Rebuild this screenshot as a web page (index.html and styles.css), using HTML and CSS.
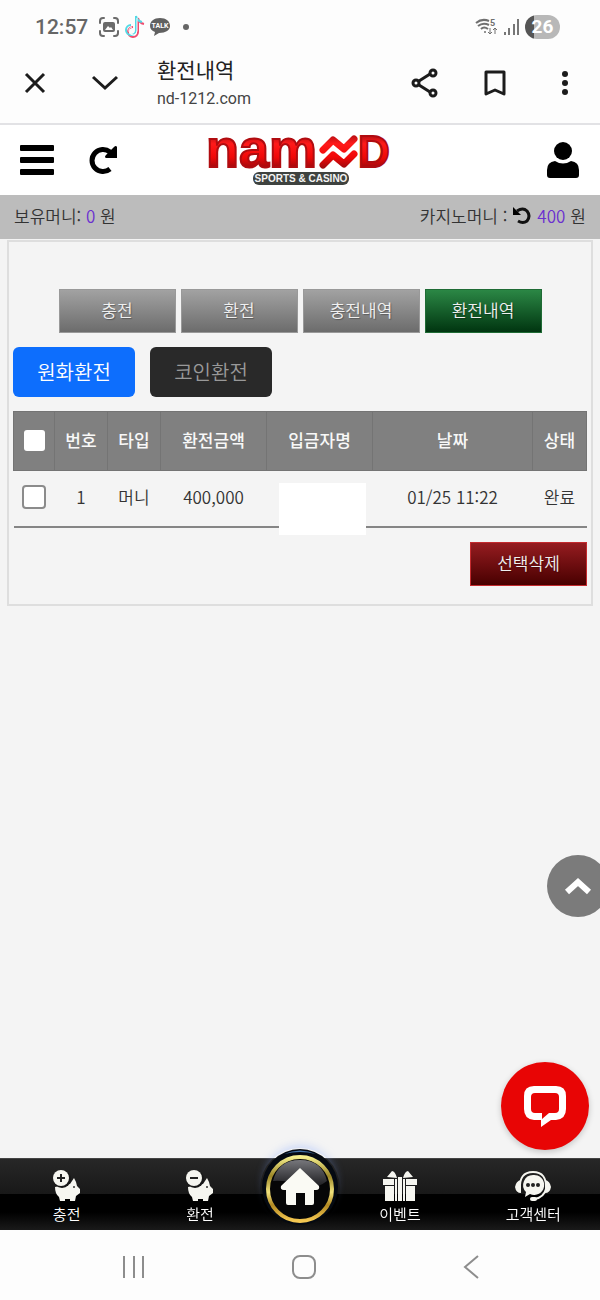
FILE: index.html
```html
<!DOCTYPE html>
<html lang="ko">
<head>
    <meta charset="UTF-8">
    <meta name="viewport" content="width=device-width, initial-scale=1.0">
    <title>환전내역</title>
    <link rel="stylesheet" href="styles.css">
</head>
<body>
    <div class="browser-bar">
        <div class="status-bar">
            <div class="status-left">
                <span class="clock">12:57</span>
                <svg width="22" height="22" viewBox="0 0 22 22" fill="none" stroke="#6b6b6b" stroke-width="2" stroke-linecap="round">
                    <path d="M2 7V5Q2 2 5 2H6M16 2H17Q20 2 20 5V7M20 15V17Q20 20 17 20H16M6 20H5Q2 20 2 17V15"/>
                    <rect x="5" y="6" width="12" height="10" rx="2" fill="#6b6b6b" stroke="none"/>
                    <path d="M7 14L10 10L12 12L13 11L15 14Z" fill="#fff" stroke="none"/>
                </svg>
                <svg width="21" height="24" viewBox="0 0 21 24" fill="none" stroke-width="2">
                    <path d="M13 2V16A5 5 0 1 1 8 11M13 2Q14 7 19 8" stroke="#ef4d70" transform="translate(1 1)"/>
                    <path d="M13 2V16A5 5 0 1 1 8 11M13 2Q14 7 19 8" stroke="#52d9e5" transform="translate(-1 -1)"/>
                    <path d="M13 3V16A4 4 0 1 1 8 12" stroke="#fff" stroke-width="1"/>
                </svg>
                <svg width="22" height="20" viewBox="0 0 22 20">
                    <path d="M11 1C5 1 1 4 1 9C1 12 3 14 6 15L5 19L10 16C17 16 21 13 21 9C21 4 17 1 11 1Z" fill="#616161"/>
                    <text x="11" y="11" text-anchor="middle" class="talk">TALK</text>
                </svg>
                <i class="dot"></i>
            </div>
            <div class="status-right">
                <svg width="24" height="20" viewBox="0 0 24 20" fill="none" stroke="#707070" stroke-width="2">
                    <path d="M1 6Q7 1 14 4M3 9Q8 5 14 8M6 12Q9 9 13 12"/>
                    <circle cx="10" cy="15" r="1" fill="#707070" stroke="none"/>
                    <path d="M15 11V17M13 15L15 17L17 15M20 17V11M18 13L20 11L22 13" stroke-width="1"/>
                    <text x="15" y="9" class="band">5</text>
                </svg>
                <svg width="18" height="18" viewBox="0 0 18 18" fill="#777">
                    <path d="M1 14H3V17H1ZM5 10H7V17H5ZM10 6H12V17H10ZM14 1H16V17H14Z"/>
                </svg>
                <span class="battery">26</span>
            </div>
        </div>
        <div class="toolbar">
            <button class="icon-btn" aria-label="닫기">
                <svg width="22" height="22" viewBox="0 0 22 22" fill="none" stroke="#1c1c1c" stroke-width="3"><path d="M2 2L20 20M20 2L2 20"/></svg>
            </button>
            <button class="icon-btn down" aria-label="접기">
                <svg width="28" height="18" viewBox="0 0 28 18" fill="none" stroke="#1c1c1c" stroke-width="3"><path d="M2 3L14 14L26 3"/></svg>
            </button>
            <div class="page-info">
                <div class="page-title">환전내역</div>
                <div class="page-url">nd-1212.com</div>
            </div>
            <div class="toolbar-actions">
                <button class="icon-btn" aria-label="공유">
                    <svg width="28" height="30" viewBox="0 0 28 30" fill="none" stroke="#1c1c1c" stroke-width="3"><path d="M8 13L19 6M8 17L19 24"/><circle cx="5" cy="15" r="3"/><circle cx="22" cy="5" r="3"/><circle cx="22" cy="25" r="3"/></svg>
                </button>
                <button class="icon-btn" aria-label="북마크">
                    <svg width="22" height="28" viewBox="0 0 22 28" fill="none" stroke="#1c1c1c" stroke-width="3" stroke-linejoin="round"><path d="M2 3H20V25L11 21L2 25Z"/></svg>
                </button>
                <button class="icon-btn" aria-label="더보기">
                    <svg width="8" height="26" viewBox="0 0 8 26" fill="#1c1c1c"><circle cx="4" cy="4" r="3"/><circle cx="4" cy="13" r="3"/><circle cx="4" cy="22" r="3"/></svg>
                </button>
            </div>
        </div>
    </div>

    <header class="site-header">
        <div class="header-side">
            <button class="icon-btn" aria-label="메뉴">
                <svg width="34" height="30" viewBox="0 0 34 30"><rect width="34" height="6" rx="1"/><rect y="12" width="34" height="6" rx="1"/><rect y="24" width="34" height="6" rx="1"/></svg>
            </button>
            <button class="icon-btn" aria-label="새로고침">
                <svg width="32" height="30" viewBox="0 0 32 30"><path d="M23 24A11 11 0 1 1 23 7" fill="none" stroke="#000" stroke-width="5"/><path d="M30 2V13H19Q17 12 19 10L27 2Q29 0 30 2Z"/></svg>
            </button>
        </div>
        <a href="#" class="logo" aria-label="NAMND Sports &amp; Casino">
            <svg width="188" height="70" viewBox="0 0 188 70">
                <defs>
                    <linearGradient id="red" x1="0" y1="8" x2="0" y2="62" gradientUnits="userSpaceOnUse">
                        <stop offset="0" stop-color="#a50d12"/>
                        <stop offset="0.2" stop-color="#ff1a1a"/>
                        <stop offset="0.45" stop-color="#f00808"/>
                        <stop offset="0.68" stop-color="#8f0a0e"/>
                    </linearGradient>
                </defs>
                <g fill="url(#red)" stroke="#b00c10">
                    <text x="0" y="42" class="logo-low">nam</text>
                    <text x="152" y="42" class="logo-cap">D</text>
                </g>
                <g fill="none" stroke="url(#red)" stroke-width="7" stroke-linecap="round" stroke-linejoin="round">
                    <path d="M117 25L127 15L138 24L148 14"/>
                    <path d="M117 40L127 30L138 39L148 29"/>
                </g>
                <rect x="47" y="47" width="96" height="13" rx="6" fill="#3e423f"/>
                <text x="95" y="57" text-anchor="middle" class="logo-tag">SPORTS &amp; CASINO</text>
            </svg>
        </a>
        <div class="header-side end">
            <button class="icon-btn" aria-label="내 정보">
                <svg width="34" height="38" viewBox="0 0 34 38"><circle cx="17" cy="10" r="9"/><path d="M1 36V29Q1 21 9 20Q17 25 25 20Q33 21 33 29V34Q33 37 30 37H4Q1 37 1 34Z"/></svg>
            </button>
        </div>
    </header>

    <div class="balance-bar">
        <div>보유머니: <span class="amount">0</span> 원</div>
        <div class="casino">카지노머니 :
            <svg width="20" height="20" viewBox="0 0 20 20"><path d="M5 5Q11 1 15 5Q19 10 15 15Q11 18 6 15" fill="none" stroke="#111" stroke-width="3"/><path d="M1 1V9H9Z"/></svg>
            <span class="amount">400</span> 원</div>
    </div>

    <main class="content">
        <section class="panel">
            <nav class="menu-tabs">
                <button class="tab">충전</button>
                <button class="tab">환전</button>
                <button class="tab">충전내역</button>
                <button class="tab active">환전내역</button>
            </nav>
            <div class="type-btns">
                <button class="type-btn blue">원화환전</button>
                <button class="type-btn dark">코인환전</button>
            </div>
            <table class="history">
                <colgroup>
                    <col class="c-check"><col class="c-small"><col class="c-small"><col class="c-mid"><col class="c-mid"><col class="c-date"><col class="c-state">
                </colgroup>
                <thead>
                    <tr>
                        <th><input type="checkbox" class="check all" aria-label="전체 선택"></th>
                        <th>번호</th>
                        <th>타입</th>
                        <th>환전금액</th>
                        <th>입금자명</th>
                        <th>날짜</th>
                        <th>상태</th>
                    </tr>
                </thead>
                <tbody>
                    <tr>
                        <td><input type="checkbox" class="check" aria-label="1번 선택"></td>
                        <td>1</td>
                        <td>머니</td>
                        <td>400,000</td>
                        <td class="name"><span class="mask"></span></td>
                        <td>01/25 11:22</td>
                        <td>완료</td>
                    </tr>
                </tbody>
            </table>
            <div class="panel-foot">
                <button class="tab delete">선택삭제</button>
            </div>
        </section>
    </main>

    <div class="bottom">
        <button class="fab top-btn" aria-label="맨 위로">
            <svg width="28" height="18" viewBox="0 0 28 18" fill="none" stroke="#fff" stroke-width="6"><path d="M3 15L14 5L25 15"/></svg>
        </button>
        <button class="fab chat-btn" aria-label="채팅">
            <svg width="42" height="42" viewBox="0 0 42 42"><path fill="#fff" fill-rule="evenodd" d="M10 1H32Q42 1 42 11V24Q42 34 32 35H27L17 42V35H10Q0 34 0 24V11Q0 1 10 1ZM11 8Q7 8 7 12V24Q7 28 11 28H18V34L25 28H31Q35 28 35 24V12Q35 8 31 8Z"/></svg>
        </button>
        <nav class="site-nav">
            <a href="#" class="nav-item">
                <svg width="28" height="32" viewBox="0 0 28 32"><path d="M2 17L17 14L21 8L23 12L24 16L27 19V23L23 26L22 31H17V29H12V31H7L6 27Q2 24 2 17Z" fill="#f6f6f0"/><circle cx="9" cy="9" r="9" fill="#171717"/><circle cx="8" cy="8" r="8" fill="#f6f6f0"/><path d="M8 4V12M4 8H12" stroke="#222" stroke-width="2"/><circle cx="21" cy="17" r="1" fill="#333"/></svg>
                충전
            </a>
            <a href="#" class="nav-item">
                <svg width="28" height="32" viewBox="0 0 28 32"><path d="M2 17L17 14L21 8L23 12L24 16L27 19V23L23 26L22 31H17V29H12V31H7L6 27Q2 24 2 17Z" fill="#f6f6f0"/><circle cx="9" cy="9" r="9" fill="#171717"/><circle cx="8" cy="8" r="8" fill="#f6f6f0"/><path d="M4 8H12" stroke="#222" stroke-width="2"/><circle cx="21" cy="17" r="1" fill="#333"/></svg>
                환전
            </a>
            <a href="#" class="home" aria-label="홈">
                <svg width="80" height="80" viewBox="0 0 80 80">
                    <defs>
                        <linearGradient id="gold" x1="0" y1="0" x2="0" y2="1">
                            <stop offset="0" stop-color="#f5ee8c"/>
                            <stop offset="0.3" stop-color="#9c8727"/>
                            <stop offset="0.55" stop-color="#f1e27c"/>
                            <stop offset="0.75" stop-color="#b38a22"/>
                            <stop offset="1" stop-color="#f5c852"/>
                        </linearGradient>
                        <linearGradient id="shine" x1="0" y1="0" x2="0" y2="1">
                            <stop offset="0" stop-color="#77777c"/>
                            <stop offset="1" stop-color="#1a1a1d"/>
                        </linearGradient>
                    </defs>
                    <circle cx="40" cy="39" r="38" fill="#050a12"/>
                    <path d="M24 6Q40 -1 56 6Q40 2 24 6Z" fill="#4372a6"/>
                    <circle cx="40" cy="41" r="32" fill="#060607" stroke="url(#gold)" stroke-width="4"/>
                    <path d="M13 33Q18 12 40 12Q62 12 67 33Q54 43 40 37Q26 32 13 33Z" fill="url(#shine)"/>
                    <path d="M40 20L59 38Q60 42 56 42H54V55Q54 57 52 57H45V45H36V57H28Q26 57 26 55V42H24Q20 42 21 38Z" fill="#fafaf4"/>
                </svg>
            </a>
            <a href="#" class="nav-item">
                <svg width="34" height="32" viewBox="0 0 34 32" fill="#f6f6f0"><path d="M0 9H11V15H0ZM23 9H34V15H23ZM2 16H11V31H2ZM23 16H32V31H23ZM12 9H14V31H12ZM20 9H22V31H20ZM15 7H19V31H15ZM4 7L9 1Q12 1 14 8ZM30 7L25 1Q22 1 20 8Z"/></svg>
                이벤트
            </a>
            <a href="#" class="nav-item">
                <svg width="36" height="32" viewBox="0 0 36 32"><path d="M5 19Q4 2 18 2Q32 2 31 19Q29 27 20 29" fill="none" stroke="#f6f6f0" stroke-width="2"/><path d="M6 10V23Q1 23 0 17Q1 11 6 10ZM30 10V23Q35 23 36 17Q35 11 30 10Z" fill="#f6f6f0"/><rect x="15" y="27" width="7" height="4" rx="2" fill="#f6f6f0"/><path d="M18 5A10 10 0 1 1 15 24L10 27L11 22A10 10 0 0 1 18 5Z" fill="#f6f6f0"/><g fill="#222"><circle cx="13" cy="15" r="2"/><circle cx="18" cy="15" r="2"/><circle cx="23" cy="15" r="2"/></g></svg>
                고객센터
            </a>
        </nav>
        <div class="system-nav">
            <button class="icon-btn" aria-label="최근 앱">
                <svg width="22" height="24" viewBox="0 0 22 24" stroke="#8d8d8d" stroke-width="2"><path d="M1 1V23M11 1V23M20 1V23"/></svg>
            </button>
            <button class="icon-btn" aria-label="홈 화면">
                <svg width="24" height="24" viewBox="0 0 24 24" fill="none" stroke="#8d8d8d" stroke-width="2"><rect x="1" y="1" width="22" height="22" rx="7"/></svg>
            </button>
            <button class="icon-btn" aria-label="뒤로">
                <svg width="16" height="24" viewBox="0 0 16 24" fill="none" stroke="#8d8d8d" stroke-width="2"><path d="M15 1L2 12L15 23"/></svg>
            </button>
        </div>
    </div>
</body>
</html>
```
FILE: styles.css
```css
:root {
    --text-color: #333;
    --amount-color: #6a2fd0;
    --page-bg: #f4f4f4;
    --line-color: #dedede;
}

* {
    margin: 0;
    padding: 0;
    box-sizing: border-box;
}

body {
    display: flex;
    flex-direction: column;
    min-height: 100vh;
    overflow-x: hidden;
    background: var(--page-bg);
    color: var(--text-color);
    font-family: 'Noto Sans CJK KR', sans-serif;
    font-size: 17px;
    font-weight: 350;
    line-height: 24px;
}

button {
    border: none;
    font: inherit;
    cursor: pointer;
}

a {
    color: inherit;
    text-decoration: none;
}

svg {
    display: block;
    flex-shrink: 0;
}

.icon-btn {
    display: flex;
    justify-content: center;
    background: none;
}

/* browser top */
.browser-bar {
    background: #fdfdfd;
    border-bottom: 2px solid #e2e2e5;
}

.status-bar {
    display: flex;
    justify-content: space-between;
    align-items: center;
    height: 54px;
    padding: 0 40px 0 35px;
}

.status-left,
.status-right {
    display: flex;
    align-items: center;
    gap: 4px;
}

.clock {
    margin-right: 6px;
    font: 500 21px/24px Roboto, sans-serif;
    color: #666;
}

.talk {
    font: bold 7px Roboto, sans-serif;
    fill: #fff;
}

.band {
    font: bold 9px Roboto, sans-serif;
    fill: #707070;
    stroke: none;
}

.dot {
    width: 6px;
    height: 6px;
    margin-left: 8px;
    border-radius: 50%;
    background: #666;
}

.battery {
    width: 35px;
    border-radius: 12px;
    background: linear-gradient(90deg, #555 26%, #b8b8b8 26%);
    color: #fff;
    font: bold 19px/24px Roboto, sans-serif;
    text-align: center;
}

.toolbar {
    display: flex;
    align-items: center;
    height: 69px;
    padding: 0 15px 12px 24px;
}

.down {
    margin: 0 38px 0 45px;
}

.page-title {
    color: #222;
    font-size: 21px;
    font-weight: 400;
    line-height: 32px;
}

.page-url {
    color: #444;
    font: 16px/28px Roboto, sans-serif;
}

.toolbar-actions {
    display: flex;
    align-items: center;
    gap: 30px;
    margin-left: auto;
}

.toolbar-actions .icon-btn {
    width: 40px;
}

/* site header */
.site-header {
    display: grid;
    grid-template-columns: 1fr auto 1fr;
    align-items: center;
    height: 70px;
    padding: 0 20px;
    background: #fff;
}

.header-side {
    display: flex;
    align-items: center;
    gap: 33px;
}

.end {
    justify-content: flex-end;
}

.logo svg {
    overflow: visible;
}

.logo-low,
.logo-cap {
    font-family: 'Liberation Sans', sans-serif;
    font-weight: bold;
    stroke-width: 2px;
}

.logo-low {
    font-size: 54px;
}

.logo-cap {
    font-size: 44px;
}

.logo-tag {
    font: bold 10px 'Liberation Sans', sans-serif;
    fill: #f4f4f4;
}

.balance-bar {
    display: flex;
    justify-content: space-between;
    align-items: center;
    height: 44px;
    padding: 0 14px 2px;
    background: #bcbcbc;
}

.casino {
    display: flex;
    align-items: center;
    gap: 5px;
}

.amount {
    color: var(--amount-color);
}

/* history panel */
.content {
    flex-grow: 1;
    padding: 1px 7px;
}

.panel {
    padding: 47px 4px 18px;
    border: 2px solid var(--line-color);
}

.menu-tabs {
    display: flex;
    justify-content: center;
    gap: 5px;
}

.tab {
    width: 117px;
    height: 44px;
    padding-bottom: 2px;
    border: 1px solid #999;
    background: linear-gradient(#a2a2a2, #6c6c6c);
    color: #f0f0f0;
    text-shadow: 1px 1px 1px rgba(0, 0, 0, 0.3);
}

.active {
    border-color: #1f6b35;
    background: linear-gradient(#2b8745, #003510);
}

.delete {
    border-color: #c42a2e;
    background: linear-gradient(#951c20, #480000);
}

.type-btns {
    display: flex;
    gap: 15px;
    padding: 14px 0;
}

.type-btn {
    width: 122px;
    height: 50px;
    border-radius: 6px;
    font-size: 20px;
}

.blue {
    background: #0d6efd;
    color: #fff;
}

.dark {
    background: #292929;
    color: #999;
}

.history {
    width: 100%;
    table-layout: fixed;
    border-collapse: collapse;
    text-align: center;
}

.c-check { width: 41px; }
.c-small { width: 53px; }
.c-mid { width: 106px; }
.c-state { width: 54px; }

.history th {
    height: 59px;
    padding-bottom: 2px;
    border: 1px solid #747474;
    background: #808080;
    color: #f8f8f8;
    font-weight: 500;
}

.history td {
    height: 56px;
    padding-bottom: 2px;
    border-bottom: 2px solid #858585;
}

.check {
    appearance: none;
    display: block;
    width: 24px;
    height: 24px;
    margin: 0 auto;
    border: 2px solid #8b8b8b;
    border-radius: 4px;
    background: #fff;
}

.all {
    width: 21px;
    height: 21px;
    border: none;
    border-radius: 3px;
}

.name {
    position: relative;
}

.mask {
    position: absolute;
    top: 12px;
    left: 12px;
    width: 87px;
    height: 52px;
    background: #fff;
}

.panel-foot {
    display: flex;
    justify-content: flex-end;
    padding-top: 14px;
}

/* bottom bars */
.bottom {
    position: sticky;
    bottom: 0;
}

.fab {
    position: absolute;
    display: flex;
    align-items: center;
    justify-content: center;
    border-radius: 50%;
}

.top-btn {
    right: -9px;
    bottom: 383px;
    width: 62px;
    height: 62px;
    background: #7b7b7b;
}

.chat-btn {
    right: 11px;
    bottom: 150px;
    width: 88px;
    height: 88px;
    background: #e80505;
    box-shadow: 0 2px 6px rgba(0, 0, 0, 0.2);
}

.site-nav {
    display: grid;
    grid-template-columns: repeat(2, minmax(0, 2fr)) minmax(0, 1fr) repeat(2, minmax(0, 2fr));
    height: 72px;
    padding-top: 11px;
    border-top: 1px solid #444;
    background: linear-gradient(#272727, #181818 50%, #000 50%, #000 75%, #1a1a1a);
    color: #fff;
    font-size: 15px;
}

.nav-item {
    display: flex;
    flex-direction: column;
    align-items: center;
}

.home {
    justify-self: center;
    margin-top: -22px;
    height: 80px;
    border-radius: 50%;
    box-shadow: 0 -6px 10px -4px rgba(130, 165, 255, 0.4);
}

.system-nav {
    display: flex;
    justify-content: space-between;
    align-items: center;
    height: 70px;
    padding: 4px 121px 0 123px;
    background: #fdfdfd;
}
```
